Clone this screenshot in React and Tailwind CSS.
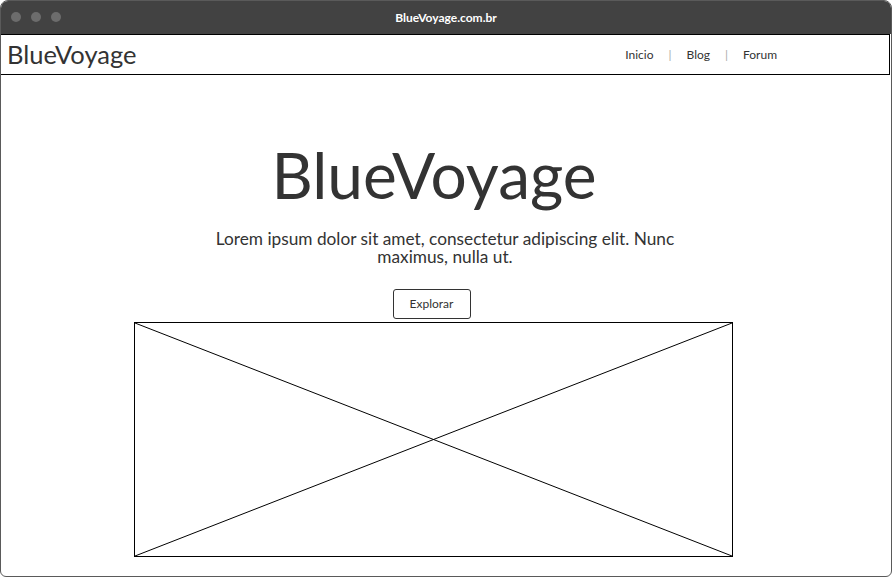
export default function App() {
  return (
    <div className="w-[892px] h-[578px] bg-white" style={{ fontFamily: 'Lato, "Open Sans", sans-serif' }}>
      <div className="w-[892px] h-[577px] flex flex-col rounded-t-[8px] rounded-b-[6px] border border-[#5a5a5a] overflow-hidden bg-white">
        <div className="h-[33px] shrink-0 bg-[#424242] relative flex items-center justify-center">
          <div className="absolute left-[10px] top-[11px] flex gap-[10px]">
            <span className="w-[10px] h-[10px] rounded-full bg-[#6c6c6c]" />
            <span className="w-[10px] h-[10px] rounded-full bg-[#6c6c6c]" />
            <span className="w-[10px] h-[10px] rounded-full bg-[#6c6c6c]" />
          </div>
          <span className="text-white text-[12px] font-bold">BlueVoyage.com.br</span>
        </div>
        <div className="h-[41px] shrink-0 mr-[1px] -ml-[1px] border-[1.5px] border-black flex items-center justify-between pl-[6px] pr-[112px]">
          <span className="text-[25.5px] text-[#333] leading-none">BlueVoyage</span>
          <nav className="flex items-center text-[12px] text-[#333]">
            <span>Inicio</span>
            <span className="mx-[15px] text-[#aaa]">|</span>
            <span>Blog</span>
            <span className="mx-[15px] text-[#aaa]">|</span>
            <span>Forum</span>
          </nav>
        </div>
        <div className="flex-1 flex flex-col items-center pt-[68px]">
          <h1 className="text-[64px] leading-none text-[#333] ml-[-24px]">BlueVoyage</h1>
          <p className="mt-[23px] w-[480px] text-center text-[17.25px] leading-[18px] text-[#333] ml-[-2px]">
            Lorem ipsum dolor sit amet, consectetur adipiscing elit. Nunc maximus, nulla ut.
          </p>
          <button className="mt-[23px] w-[78px] h-[30px] border border-[#333] rounded-[3px] text-[12px] text-[#333] ml-[-29px]">
            Explorar
          </button>
          <div className="mt-[3px] ml-[-26px] w-[599px] h-[235px] border border-black relative">
            <svg className="absolute inset-0 w-full h-full" viewBox="0 0 597 233" preserveAspectRatio="none">
              <line x1="0" y1="0" x2="597" y2="233" stroke="black" strokeWidth="1" />
              <line x1="597" y1="0" x2="0" y2="233" stroke="black" strokeWidth="1" />
            </svg>
          </div>
        </div>
      </div>
    </div>
  );
}
